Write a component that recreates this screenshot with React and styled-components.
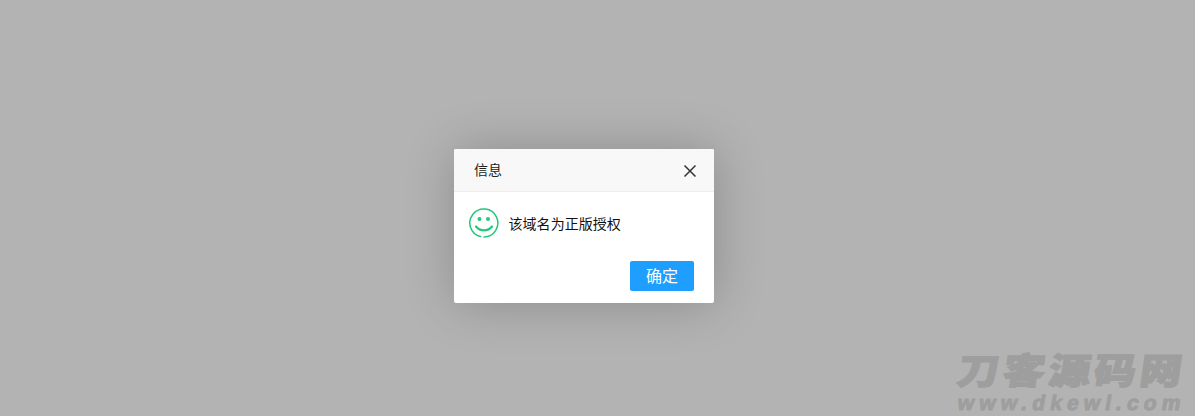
import React from "react";
import styled, { createGlobalStyle } from "styled-components";

const GlobalStyle = createGlobalStyle`
  html, body {
    margin: 0;
    height: 100%;
    overflow: hidden;
  }
  body {
    background: #b3b3b3;
    font-family: "Liberation Sans", "Noto Sans CJK SC", sans-serif;
  }
`;

const Shade = styled.div`
  position: relative;
  width: 100vw;
  height: 100vh;
  background: #b3b3b3;
`;

const Layer = styled.div`
  position: absolute;
  left: 454px;
  top: 149px;
  width: 260px;
  height: 154px;
  background: #fff;
  border-radius: 2px;
  box-shadow: 1px 1px 50px rgba(0, 0, 0, 0.22);
  display: flex;
  flex-direction: column;
`;

const Title = styled.div`
  height: 43px;
  box-sizing: border-box;
  padding: 0 17px 2px 20px;
  background: #f8f8f8;
  border-bottom: 1px solid #eee;
  border-radius: 2px 2px 0 0;
  display: flex;
  align-items: center;
  justify-content: space-between;
  font-size: 14px;
  color: #222;
`;

const Close = styled.svg`
  width: 14px;
  height: 14px;
  display: block;
  margin-top: 3px;
`;

const Content = styled.div`
  display: flex;
  align-items: center;
  gap: 10px;
  padding: 16px 15px 0 15px;
  font-size: 14px;
  letter-spacing: 0.05px;
  color: #111;
  height: 30px;
`;

const Message = styled.span`
  margin-left: -0.5px;
`;

const Footer = styled.div`
  display: flex;
  justify-content: flex-end;
  padding: 23px 20px 0 0;
`;

const Button = styled.button`
  width: 64px;
  height: 30px;
  padding: 0 0 2px;
  border: 0;
  border-radius: 2px;
  background: #1e9fff;
  color: #fff;
  font-family: inherit;
  font-size: 16px;
`;

const Watermark = styled.div`
  position: absolute;
  left: 958px;
  top: 349px;
  width: 228px;
  display: flex;
  flex-direction: column;
  gap: 5px;
  color: #9e9e9e;
`;

const MarkName = styled.div`
  font-family: "Noto Sans CJK SC", sans-serif;
  font-weight: 900;
  font-size: 42px;
  line-height: 40px;
  letter-spacing: 3.6px;
  white-space: nowrap;
  -webkit-text-stroke: 1.4px #9e9e9e;
  transform: skewX(-8deg) scaleY(0.86);
`;

const MarkUrl = styled.div`
  font-family: "Liberation Sans", sans-serif;
  font-weight: 700;
  font-size: 21px;
  line-height: 18px;
  letter-spacing: 5.1px;
  white-space: nowrap;
  -webkit-text-stroke: 1px #9e9e9e;
  transform: skewX(-10deg);
`;

const Smile = () => (
  <svg width="30" height="30" viewBox="0 0 30 30" fill="none">
    <path
      d="M11.5 28.6A14 14 0 1 1 15 29"
      stroke="#22c97c"
      strokeWidth="1.5"
      strokeLinecap="round"
    />
    <path d="M7 18.5q3 3.8 8 3.8t8-3.8" stroke="#22c97c" strokeWidth="2.2" strokeLinecap="round" />
    <circle cx="10.5" cy="11" r="2" fill="#22c97c" />
    <circle cx="19" cy="11" r="2" fill="#22c97c" />
  </svg>
);

export default function App() {
  return (
    <>
      <GlobalStyle />
      <Shade>
        <Layer>
          <Title>
            <span>信息</span>
            <Close viewBox="0 0 14 14">
              <path d="M1.5 1.5l11 11M12.5 1.5l-11 11" stroke="#333" strokeWidth="1.5" />
            </Close>
          </Title>
          <Content>
            <Smile />
            <Message>该域名为正版授权</Message>
          </Content>
          <Footer>
            <Button>确定</Button>
          </Footer>
        </Layer>
        <Watermark>
          <MarkName>刀客源码网</MarkName>
          <MarkUrl>www.dkewl.com</MarkUrl>
        </Watermark>
      </Shade>
    </>
  );
}
